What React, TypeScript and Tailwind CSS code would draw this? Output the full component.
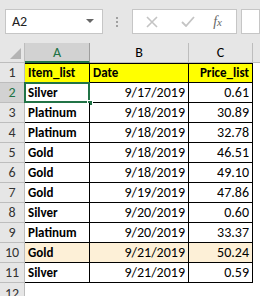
import React from "react";

const rows = [
  { item: "Silver", date: "9/17/2019", price: "0.61" },
  { item: "Platinum", date: "9/18/2019", price: "30.89" },
  { item: "Platinum", date: "9/18/2019", price: "32.78" },
  { item: "Gold", date: "9/18/2019", price: "46.51" },
  { item: "Gold", date: "9/18/2019", price: "49.10" },
  { item: "Gold", date: "9/19/2019", price: "47.86" },
  { item: "Silver", date: "9/20/2019", price: "0.60" },
  { item: "Platinum", date: "9/20/2019", price: "33.37" },
  { item: "Gold", date: "9/21/2019", price: "50.24" },
  { item: "Silver", date: "9/21/2019", price: "0.59" },
];

const font = "font-['Calibri','Liberation_Sans',sans-serif]";

const App = () => {
  return (
    <div className={`w-[260px] h-[296px] overflow-hidden bg-white text-black ${font}`}>
      {/* formula bar */}
      <div className="h-[43px] bg-[#e6e6e6] flex items-start pt-[9px] pl-[5px]">
        <div className="w-[102px] h-[25px] bg-white border border-[#c6c6c6] flex items-center justify-between pl-[6px] pr-[8px]">
          <span className="text-[14px] text-[#222]">A2</span>
          <svg width="8" height="5" viewBox="0 0 8 5">
            <path d="M0 0h8L4 4z" fill="#666" />
          </svg>
        </div>
        <div className="w-[31px] h-[25px] flex flex-col items-center justify-center gap-[2px]">
          <span className="w-[2px] h-[2px] bg-[#a0a0a0]" />
          <span className="w-[2px] h-[2px] bg-[#a0a0a0]" />
          <span className="w-[2px] h-[2px] bg-[#a0a0a0]" />
        </div>
        <div className="w-[110px] h-[25px] bg-white border border-[#c6c6c6] flex items-center">
          <svg className="ml-[13px]" width="12" height="12" viewBox="0 0 12 12">
            <path d="M1 1L11 11M11 1L1 11" stroke="#c4c4c4" strokeWidth="1.6" />
          </svg>
          <svg className="ml-[23px]" width="14" height="11" viewBox="0 0 14 11">
            <path d="M1 6L5 10L13 1" stroke="#c4c4c4" strokeWidth="1.8" fill="none" />
          </svg>
          <span className="ml-[18px] text-[14px] italic text-[#666] font-['Liberation_Serif',serif]">
            f<span className="text-[11px]">x</span>
          </span>
        </div>
        <div className="ml-[4px] w-[20px] h-[25px] bg-white border border-[#c6c6c6]" />
      </div>

      {/* sheet */}
      <div className="grid grid-cols-[25px_65px_99px_64px_1fr] auto-rows-[20px] text-[14px]">
        {/* column headers */}
        <div className="bg-[#e6e6e6] border-r border-b border-[#bdbdbd] flex items-end justify-end p-[3px]">
          <svg width="11" height="11" viewBox="0 0 11 11">
            <path d="M11 0V11H0z" fill="#b4b4b4" />
          </svg>
        </div>
        <div className="bg-[#d2d2d2] border-r border-[#9e9e9e] border-b-2 border-b-[#217346] flex items-center justify-center text-[#217346]">
          A
        </div>
        <div className="bg-[#e6e6e6] border-r border-b border-[#bdbdbd] flex items-center justify-center">B</div>
        <div className="bg-[#e6e6e6] border-r border-b border-[#bdbdbd] flex items-center justify-center">C</div>
        <div className="bg-[#e6e6e6] border-b border-[#bdbdbd]" />

        {/* header row */}
        <div className="bg-[#e6e6e6] border-r border-b border-[#bdbdbd] flex items-center justify-center text-[#333]">
          1
        </div>
        <div className="bg-[#ffff00] border border-black border-l-0 font-bold text-[13px] flex items-center pl-[3px]">
          Item_list
        </div>
        <div className="bg-[#ffff00] border-y border-r border-black font-bold text-[13px] flex items-center pl-[3px]">
          Date
        </div>
        <div className="bg-[#ffff00] border-y border-r border-black font-bold text-[13px] flex items-center justify-end pr-[3px]">
          Price_list
        </div>
        <div />

        {rows.map((r, i) => {
          const n = i + 2;
          const sel = n === 2;
          const hl = n === 10 ? "bg-[#fdf0d7]" : "bg-white";
          return (
            <React.Fragment key={n}>
              <div
                className={`${sel ? "bg-[#d2d2d2] text-[#217346]" : "bg-[#e6e6e6] text-[#333]"} border-r border-b border-[#bdbdbd] flex items-center justify-center`}
              >
                {n}
              </div>
              <div className={`${hl} border-r border-b border-black font-bold text-[13px] flex items-center pl-[3px] relative`}>
                {r.item}
                {sel && (
                  <>
                    <div className="absolute -left-px -top-px -right-px -bottom-px border-2 border-[#217346]" />
                    <div className="absolute -right-[4px] -bottom-[4px] w-[6px] h-[6px] bg-[#217346] border border-white" />
                  </>
                )}
              </div>
              <div className={`${hl} border-r border-b border-black flex items-center justify-end pr-[3px]`}>{r.date}</div>
              <div className={`${hl} border-r border-b border-black flex items-center justify-end pr-[3px]`}>{r.price}</div>
              <div />
            </React.Fragment>
          );
        })}

        <div className="bg-[#e6e6e6] border-r border-[#bdbdbd] flex items-center justify-center text-[#333]">12</div>
        <div />
        <div />
        <div />
        <div />
      </div>
    </div>
  );
};

export default App;
